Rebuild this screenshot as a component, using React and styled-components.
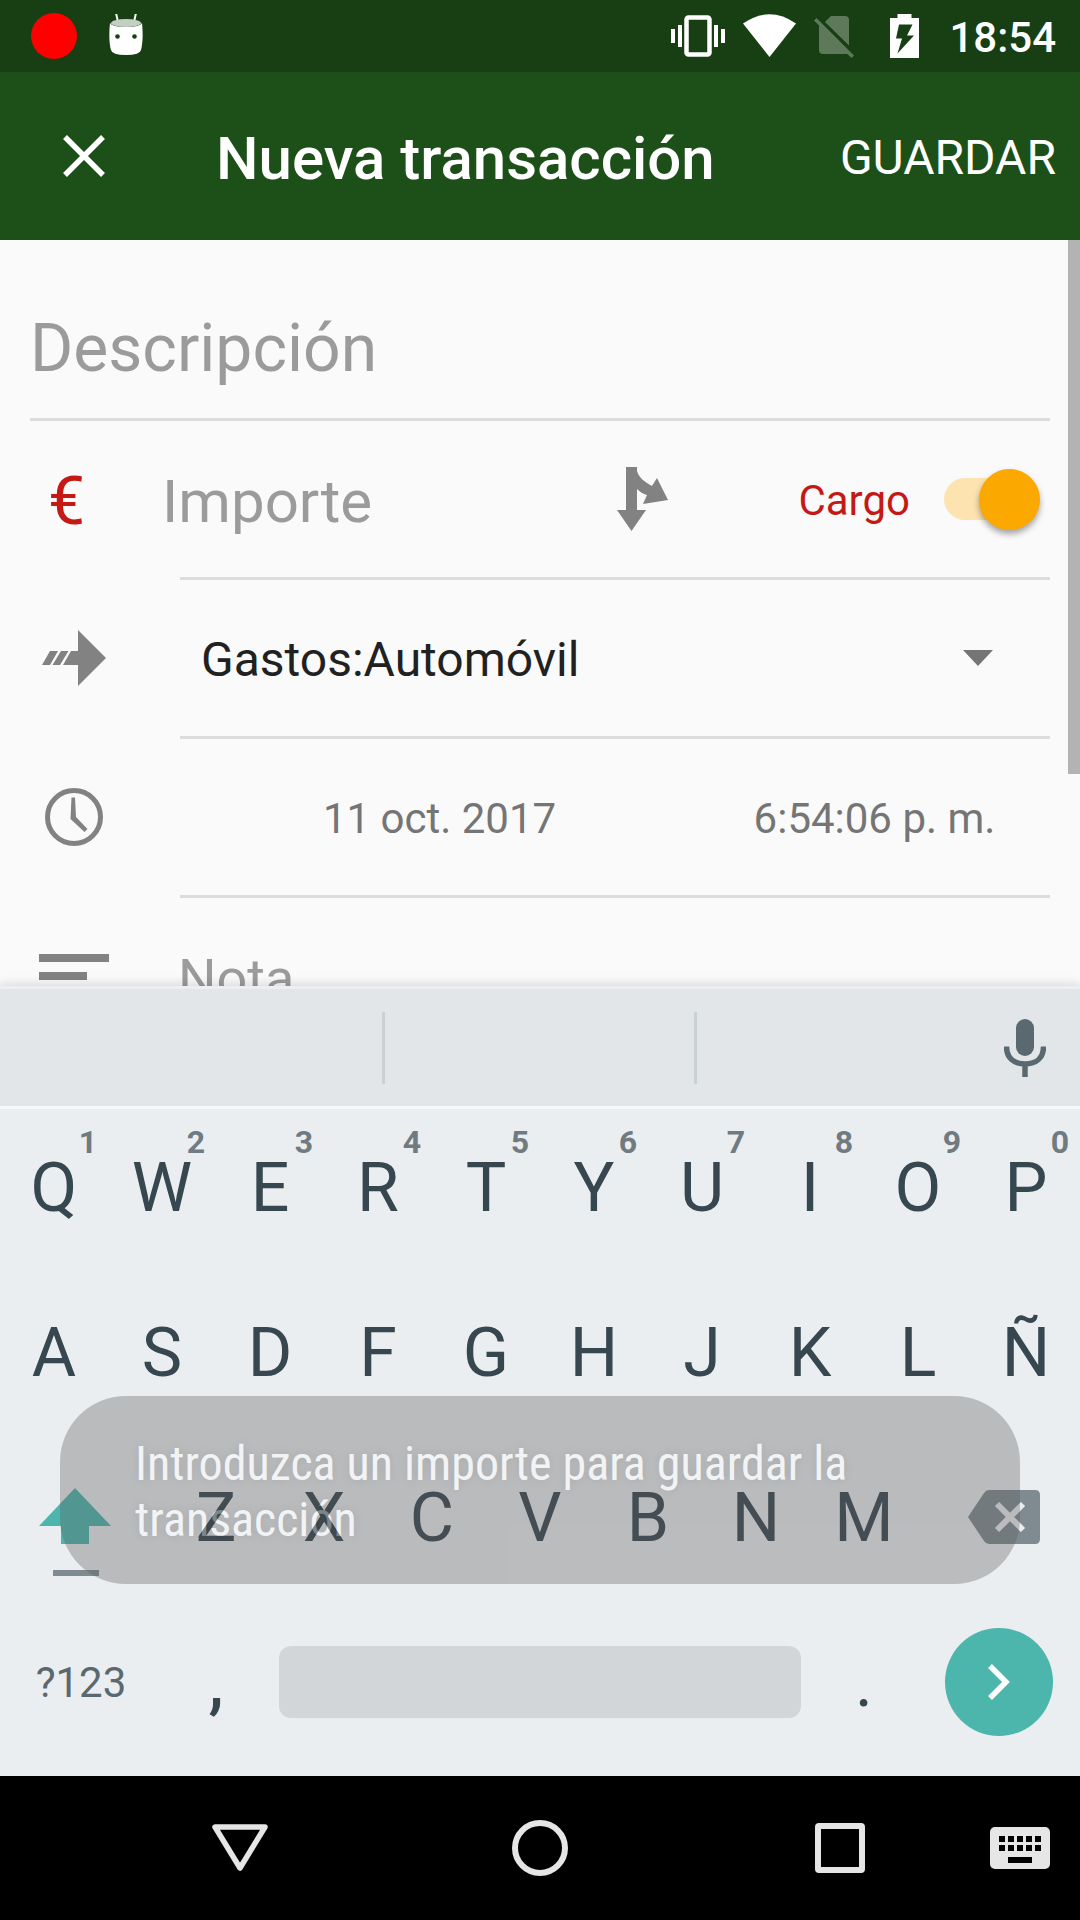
import React, { useState } from "react";
import styled, { createGlobalStyle } from "styled-components";

const GlobalStyle = createGlobalStyle`
  *, *::before, *::after { box-sizing: border-box; }
  body {
    margin: 0;
    background: #fafafa;
    font-family: Roboto, "Noto Sans", sans-serif;
  }
  button, input, select {
    margin: 0;
    padding: 0;
    border: 0;
    background: none;
    color: inherit;
    font: inherit;
    border-radius: 0;
    outline: none;
  }
  svg { display: block; flex: none; }
`;

const Screen = styled.div`
  display: flex;
  flex-direction: column;
  height: 100vh;
  overflow: hidden;
`;

/* Status bar */

const StatusBar = styled.div`
  display: flex;
  align-items: center;
  flex: none;
  height: 72px;
  padding: 0 24px 0 31px;
  background: #173f13;
  color: #fff;
`;

const RecordDot = styled.span`
  width: 46px;
  height: 46px;
  margin-right: 32px;
  border-radius: 50%;
  background: #f00;
`;

const StatusIcons = styled.div`
  display: flex;
  align-items: center;
  gap: 18px;
  margin-left: auto;
`;

const Battery = styled.div`
  margin: 0 12px 0 18px;
`;

const Clock = styled.time`
  padding-top: 4px;
  font-size: 42px;
  font-weight: 500;
  line-height: 48px;
`;

/* App bar */

const AppBar = styled.header`
  display: flex;
  align-items: center;
  flex: none;
  height: 168px;
  padding-right: 24px;
  background: #1d5018;
  color: #fff;
`;

const CloseButton = styled.button`
  display: flex;
  align-items: center;
  justify-content: center;
  width: 168px;
  height: 168px;
`;

const Title = styled.h1`
  flex: 1;
  margin: 0;
  padding: 6px 0 0 48px;
  font-size: 60px;
  font-weight: 500;
  line-height: 72px;
`;

const SaveButton = styled.button`
  padding-top: 4px;
  font-size: 48px;
  line-height: 56px;
  text-transform: uppercase;
`;

/* Form */

const FormArea = styled.main`
  position: relative;
  flex: 1;
  min-height: 0;
  overflow: hidden;
  background: #fafafa;
`;

const ScrollThumb = styled.div`
  position: absolute;
  top: 0;
  right: 0;
  width: 12px;
  height: 534px;
  background: #b3b3b3;
`;

const Form = styled.form`
  display: flex;
  flex-direction: column;
  padding-right: 30px;
`;

const TextInput = styled.input`
  flex: 1;
  width: 100%;
  min-width: 0;
  height: 100%;
  padding-top: 4px;
  font-size: ${(p) => p.$size}px;
  color: #212121;
  &::placeholder {
    color: #9b9b9b;
    opacity: 1;
  }
`;

const DescriptionField = styled.div`
  display: flex;
  height: 181px;
  margin-left: 30px;
  padding-top: 34px;
  border-bottom: 3px solid #dcdcdc;
`;

const Row = styled.div`
  display: flex;
  height: 159px;
`;

const RowIcon = styled.label`
  display: flex;
  align-items: center;
  justify-content: center;
  width: 147px;
  margin-right: 33px;
  padding-bottom: 3px;
  color: #828282;
`;

const Currency = styled.span`
  padding: 6px 14px 0 0;
  font-size: 66px;
  line-height: 72px;
  color: #c41915;
`;

const RowContent = styled.div`
  position: relative;
  display: flex;
  align-items: center;
  flex: 1;
  min-width: 0;
  border-bottom: 3px solid #dcdcdc;
`;

const AmountInput = styled(TextInput)`
  margin-left: -18px;
`;

const NoteInput = styled(TextInput)`
  margin-left: -2px;
`;

const SplitButton = styled.button`
  margin-right: 130px;
  color: #828282;
`;

const TypeLabel = styled.label`
  padding: 4px 34px 0 0;
  font-size: 42px;
  line-height: 48px;
  color: #c41915;
`;

const Switch = styled.input`
  appearance: none;
  position: relative;
  display: flex;
  align-items: center;
  width: 96px;
  height: 61px;
  margin-right: 10px;
  &::before {
    content: "";
    position: absolute;
    left: 0;
    right: 9px;
    height: 42px;
    border-radius: 21px;
    background: #fde3b0;
  }
  &::after {
    content: "";
    position: relative;
    width: 61px;
    height: 61px;
    margin-left: ${(p) => (p.checked ? "auto" : "0")};
    border-radius: 50%;
    background: #fba900;
    box-shadow: 0 4px 6px rgba(0, 0, 0, 0.35);
  }
`;

const AccountSelect = styled.select`
  appearance: none;
  width: 100%;
  height: 100%;
  padding: 2px 100px 0 21px;
  font-size: 48px;
  color: #212121;
`;

const Caret = styled.svg`
  position: absolute;
  right: 57px;
  pointer-events: none;
`;

const PickerButton = styled.button`
  flex: 1;
  height: 100%;
  padding: 2px 0 0 84px;
  font-size: 42px;
  color: #757575;
`;

/* Keyboard */

const Keyboard = styled.section`
  position: relative;
  flex: none;
  padding-bottom: 7px;
  background: #ebeef1;
  border-top: 3px solid #eceeef;
  box-shadow: 0 -2px 10px rgba(0, 0, 0, 0.14);
  color: #37474f;
`;

const Suggestions = styled.div`
  display: grid;
  grid-template-columns: 385fr 312fr 383fr;
  align-items: center;
  height: 120px;
  border-bottom: 3px solid #f5f7f9;
  background: #e2e6e9;
`;

const Suggestion = styled.div`
  height: 72px;
  border-right: 3px solid #cbd0d3;
`;

const VoiceButton = styled.button`
  justify-self: end;
  margin-right: 34px;
  color: #5a6970;
`;

const KeyRow = styled.div`
  display: flex;
  height: 165px;
`;

const Key = styled.button`
  position: relative;
  display: flex;
  align-items: center;
  justify-content: center;
  flex: ${(p) => p.$span || 2} 1 0;
  min-width: 0;
  height: 165px;
  padding-bottom: ${(p) => (p.$drawn ? 10 : 8)}px;
  font-size: ${(p) => (p.$small ? 42 : 68)}px;
  font-weight: ${(p) => (p.$strong ? 500 : 400)};
  color: ${(p) => (p.$small ? "#5a6970" : "#37474f")};
`;

const Hint = styled.span`
  position: absolute;
  top: 17px;
  right: 11px;
  font-size: 32px;
  font-weight: 700;
  line-height: 32px;
  color: #6f7b81;
`;

const SpaceBar = styled.span`
  flex: 1;
  height: 72px;
  margin: 0 9px;
  border-radius: 12px;
  background: #d2d6d9;
`;

const EnterDisc = styled.span`
  display: flex;
  align-items: center;
  justify-content: center;
  width: 108px;
  height: 108px;
  border-radius: 50%;
  background: #4db6ac;
`;

const Toast = styled.div`
  position: absolute;
  left: 60px;
  right: 60px;
  bottom: 192px;
  padding: 40px 75px 36px;
  border-radius: 66px;
  background: #5b5b5b;
  opacity: 0.34;
  color: #fff;
  font-family: "Roboto Condensed", Roboto, sans-serif;
  font-size: 48px;
  line-height: 56px;
  text-shadow: 0 0 8px rgba(0, 0, 0, 0.6);
  pointer-events: none;
`;

/* Navigation bar */

const NavBar = styled.nav`
  display: grid;
  grid-template-columns: 90px 1fr 1fr 1fr 90px;
  flex: none;
  height: 144px;
  background: #000;
  color: #e6e6e6;
`;

const NavButton = styled.button`
  display: flex;
  align-items: center;
  justify-content: center;
  &:first-child { grid-column: 2; }
  &:last-child { justify-content: flex-start; }
`;

const topRow = [..."QWERTYUIOP"];
const homeRow = [..."ASDFGHJKLÑ"];
const bottomRow = [..."ZXCVBNM"];

export default function App() {
  const [debit, setDebit] = useState(true);
  return (
    <>
      <GlobalStyle />
      <Screen>
        <StatusBar>
          <RecordDot />
          <svg width="34" height="44" viewBox="0 0 34 44" fill="#fff">
            <path d="M7 -1 9 8M27 -1 25 8" stroke="#fff" strokeWidth="2" />
            <path d="M1 9C0 18 0 29 2 36Q3 41 17 41T32 36C34 29 34 18 33 9Q31 13 17 13T1 9Z" />
            <ellipse cx="17" cy="9" rx="15" ry="4" fill="#c3cfc2" />
            <circle cx="8.500" cy="22.500" r="2.300" fill="#173f13" />
            <circle cx="25.500" cy="22.500" r="2.300" fill="#173f13" />
          </svg>
          <StatusIcons>
            <svg width="54" height="44" viewBox="0 0 54 44" fill="#fff">
              <rect x="15.500" y="3.500" width="23" height="37" rx="2" fill="none" stroke="#fff" strokeWidth="4.500" />
              <path d="M0 15h4v14H0zM7 11h4v22H7zM43 11h4v22h-4zM50 15h4v14h-4z" />
            </svg>
            <svg width="53" height="44" viewBox="0 0 53 44" fill="#fff">
              <path d="M0 9.500Q26.500-9 53 9.500L26.500 43Z" />
            </svg>
            <svg width="40" height="44" viewBox="0 0 40 44" fill="#fff" opacity="0.3">
              <path d="M11 8 17 2H31Q35 2 35 6V31.500Z" />
              <path d="M0 6.500 2.500 4 40 41.500 37.500 44 33.500 40H9Q5 40 5 36V11.500Z" />
            </svg>
            <Battery>
              <svg width="29" height="44" viewBox="0 0 29 44">
                <path
                  d="M7.500 0h14v4H29v40H0V4h7.500ZM9 10.500 6 24.500H12L7.500 39.500 24 21.500H17L22.500 10.500Z"
                  fill="#fff"
                  fillRule="evenodd"
                />
              </svg>
            </Battery>
            <Clock>18:54</Clock>
          </StatusIcons>
        </StatusBar>

        <AppBar>
          <CloseButton type="button" aria-label="Cerrar">
            <svg width="42" height="42" viewBox="0 0 42 42" stroke="#fff" strokeWidth="5.500">
              <path d="M2 2 40 40M40 2 2 40" />
            </svg>
          </CloseButton>
          <Title>Nueva transacción</Title>
          <SaveButton type="submit" form="transaction">Guardar</SaveButton>
        </AppBar>

        <FormArea>
          <Form id="transaction" onSubmit={(e) => e.preventDefault()}>
            <DescriptionField>
              <TextInput $size={66} placeholder="Descripción" aria-label="Descripción" />
            </DescriptionField>

            <Row>
              <RowIcon htmlFor="amount">
                <Currency>€</Currency>
              </RowIcon>
              <RowContent>
                <AmountInput id="amount" $size={60} placeholder="Importe" inputMode="decimal" />
                <SplitButton type="button" aria-label="Dividir">
                  <svg width="51" height="64" viewBox="0 0 51 64" fill="currentColor">
                    <path d="M9 0H20V4C22 11 28 15 35 19L40 11 51 33 26 37 30 28C26 27 23 25 20 22V43H29L14.500 64 0 43H9Z" />
                  </svg>
                </SplitButton>
                <TypeLabel htmlFor="type">Cargo</TypeLabel>
                <Switch
                  id="type"
                  type="checkbox"
                  checked={debit}
                  onChange={(e) => setDebit(e.target.checked)}
                />
              </RowContent>
            </Row>

            <Row>
              <RowIcon htmlFor="account">
                <svg width="64" height="56" viewBox="0 0 64 56" fill="currentColor">
                  <path d="M36 0 64 28 36 56V35H21L29 21H36ZM8 21H16L8 35H0ZM19 21H26.500L18 35H10.500Z" />
                </svg>
              </RowIcon>
              <RowContent>
                <AccountSelect id="account" defaultValue="auto">
                  <option value="auto">Gastos:Automóvil</option>
                </AccountSelect>
                <Caret width="30" height="16" viewBox="0 0 30 16" fill="#757575">
                  <path d="M0 0H30L15 16Z" />
                </Caret>
              </RowContent>
            </Row>

            <Row>
              <RowIcon as="div">
                <svg width="58" height="58" viewBox="0 0 58 58" fill="currentColor">
                  <circle cx="29" cy="29" r="26.500" fill="none" stroke="currentColor" strokeWidth="5" />
                  <path d="M26.500 9.500H30L31 29 42.500 41 39.500 44 25.500 31Z" />
                </svg>
              </RowIcon>
              <RowContent>
                <PickerButton type="button">11 oct. 2017</PickerButton>
                <PickerButton type="button">6:54:06 p. m.</PickerButton>
              </RowContent>
            </Row>

            <Row>
              <RowIcon htmlFor="note">
                <svg width="70" height="44" viewBox="0 0 70 44" fill="currentColor">
                  <path d="M0 0H70V8H0ZM0 18H48V26H0ZM0 36H70V44H0Z" />
                </svg>
              </RowIcon>
              <RowContent>
                <NoteInput id="note" $size={54} placeholder="Nota" />
              </RowContent>
            </Row>
          </Form>
          <ScrollThumb />
        </FormArea>

        <Keyboard aria-label="Teclado">
          <Suggestions>
            <Suggestion />
            <Suggestion />
            <VoiceButton type="button" aria-label="Entrada de voz">
              <svg width="42" height="58" viewBox="0 0 42 58">
                <rect x="12" y="0" width="18" height="37" rx="9" fill="currentColor" />
                <path
                  d="M2.500 27.500C2.500 39 10 45 21 45S39.500 39 39.500 27.500M21 45V58"
                  fill="none"
                  stroke="currentColor"
                  strokeWidth="5.500"
                />
              </svg>
            </VoiceButton>
          </Suggestions>
          <KeyRow>
            {topRow.map((letter, i) => (
              <Key key={letter} type="button">
                {letter}
                <Hint>{(i + 1) % 10}</Hint>
              </Key>
            ))}
          </KeyRow>
          <KeyRow>
            {homeRow.map((letter) => (
              <Key key={letter} type="button">{letter}</Key>
            ))}
          </KeyRow>
          <KeyRow>
            <Key $span={3} $drawn type="button" aria-label="Mayúsculas">
              <svg width="84" height="120" viewBox="0 0 84 120">
                <path d="M36 31 72 69H50V87H22V69H0Z" fill="#4db6ac" />
                <path d="M14 113H60V119H14Z" fill="#808b91" />
              </svg>
            </Key>
            {bottomRow.map((letter) => (
              <Key key={letter} type="button">{letter}</Key>
            ))}
            <Key $span={3} $drawn type="button" aria-label="Borrar">
              <svg width="82" height="54" viewBox="0 0 82 54">
                <path d="M10 27 26 3Q28 0 31 0H77Q82 0 82 5V49Q82 54 77 54H31Q28 54 26 51Z" fill="#808b91" />
                <path d="M39 14 65 40M65 14 39 40" stroke="#ebeef1" strokeWidth="6" />
              </svg>
            </Key>
          </KeyRow>
          <KeyRow>
            <Key $span={3} $small type="button">?123</Key>
            <Key $strong type="button">,</Key>
            <Key $span={10} $drawn type="button" aria-label="Espacio">
              <SpaceBar />
            </Key>
            <Key type="button">.</Key>
            <Key $span={3} $drawn type="button" aria-label="Siguiente">
              <EnterDisc>
                <svg width="22" height="36" viewBox="0 0 22 36">
                  <path d="M2 2 18 18 2 34" fill="none" stroke="#fff" strokeWidth="5.500" />
                </svg>
              </EnterDisc>
            </Key>
          </KeyRow>
          <Toast role="status">Introduzca un importe para guardar la transacción</Toast>
        </Keyboard>

        <NavBar>
          <NavButton type="button" aria-label="Atrás">
            <svg width="56" height="48" viewBox="0 0 56 48">
              <path d="M3 3H53L28 44Z" fill="none" stroke="currentColor" strokeWidth="5.500" strokeLinejoin="round" />
            </svg>
          </NavButton>
          <NavButton type="button" aria-label="Inicio">
            <svg width="56" height="56" viewBox="0 0 56 56">
              <circle cx="28" cy="28" r="25" fill="none" stroke="currentColor" strokeWidth="6" />
            </svg>
          </NavButton>
          <NavButton type="button" aria-label="Recientes">
            <svg width="50" height="50" viewBox="0 0 50 50">
              <rect x="3" y="3" width="44" height="44" rx="1" fill="none" stroke="currentColor" strokeWidth="6" strokeLinejoin="round" />
            </svg>
          </NavButton>
          <NavButton type="button" aria-label="Cambiar teclado">
            <svg width="60" height="42" viewBox="0 0 60 42">
              <rect width="60" height="42" rx="5" fill="currentColor" />
              <path
                d="M9 9h6v6H9zM18 9h6v6h-6zM27 9h6v6h-6zM36 9h6v6h-6zM45 9h6v6h-6zM9 18h6v6H9zM18 18h6v6h-6zM27 18h6v6h-6zM36 18h6v6h-6zM45 18h6v6h-6zM18 30h24v6H18z"
                fill="#000"
              />
            </svg>
          </NavButton>
        </NavBar>
      </Screen>
    </>
  );
}
